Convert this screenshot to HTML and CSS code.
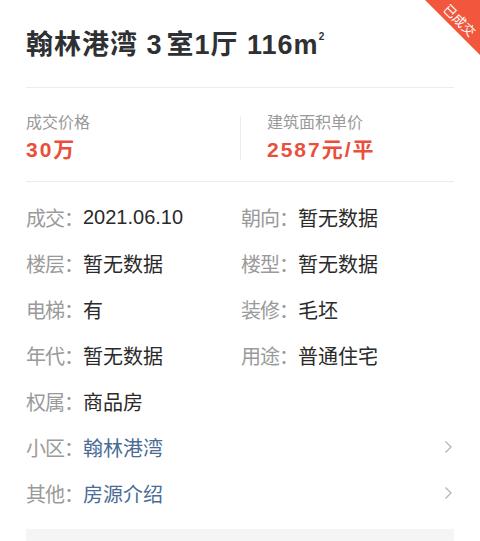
FILE: index.html
```html
<!DOCTYPE html>
<html lang="zh-CN">
<head>
    <meta charset="UTF-8">
    <meta name="viewport" content="width=device-width, initial-scale=1.0">
    <title>翰林港湾 成交详情</title>
    <link rel="stylesheet" href="styles.css">
</head>
<body>
    <div id="card">
        <div class="ribbon"><span>已成交</span></div>

        <h1 class="title">翰林港湾 <span class="num">3</span>室1厅 116m<sup>2</sup></h1>

        <div class="price-row">
            <div class="price-item">
                <div class="price-label">成交价格</div>
                <div class="price-value">30万</div>
            </div>
            <div class="v-line"></div>
            <div class="price-item second">
                <div class="price-label">建筑面积单价</div>
                <div class="price-value">2587元/平</div>
            </div>
        </div>

        <div class="info-list">
            <div class="info-item"><span class="key">成交：</span><span class="val">2021.06.10</span></div>
            <div class="info-item"><span class="key">朝向：</span><span class="val">暂无数据</span></div>
            <div class="info-item"><span class="key">楼层：</span><span class="val">暂无数据</span></div>
            <div class="info-item"><span class="key">楼型：</span><span class="val">暂无数据</span></div>
            <div class="info-item"><span class="key">电梯：</span><span class="val">有</span></div>
            <div class="info-item"><span class="key">装修：</span><span class="val">毛坯</span></div>
            <div class="info-item"><span class="key">年代：</span><span class="val">暂无数据</span></div>
            <div class="info-item"><span class="key">用途：</span><span class="val">普通住宅</span></div>
            <div class="info-item full"><span class="key">权属：</span><span class="val">商品房</span></div>
            <a class="info-item full link" href="#">
                <span class="key">小区：</span><span class="val">翰林港湾</span>
                <svg class="arrow" width="9" height="14" viewBox="0 0 9 14"><polyline points="1.5,1.5 7,7 1.5,12.5" fill="none" stroke="#b5b5b5" stroke-width="1.3"/></svg>
            </a>
            <a class="info-item full link" href="#">
                <span class="key">其他：</span><span class="val">房源介绍</span>
                <svg class="arrow" width="9" height="14" viewBox="0 0 9 14"><polyline points="1.5,1.5 7,7 1.5,12.5" fill="none" stroke="#b5b5b5" stroke-width="1.3"/></svg>
            </a>
        </div>

        <div class="gray-box"></div>
    </div>
</body>
</html>
```

FILE: styles.css
```css
body {
    margin: 0;
    background-color: #fff;
    font-family: 'Liberation Sans', 'Noto Sans CJK SC', sans-serif;
    color: #333;
}
#card {
    position: relative;
    padding: 27px 26px 0;
    overflow: hidden;
    height: 541px;
    box-sizing: border-box;
}
.ribbon {
    position: absolute;
    top: 0;
    right: 0;
    width: 55px;
    height: 55px;
    background-color: #f2573d;
    clip-path: polygon(0 0, 100% 0, 100% 100%);
}
.ribbon span {
    position: absolute;
    left: 12px;
    top: 12px;
    width: 44px;
    height: 18px;
    line-height: 18px;
    font-size: 13px;
    color: #fff;
    text-align: center;
    transform: rotate(45deg);
}
.title {
    margin: 0;
    font-size: 27px;
    line-height: 36px;
    font-weight: bold;
    letter-spacing: 1px;
    color: #2e3033;
    padding-bottom: 24px;
    border-bottom: 1px solid #ececec;
}
.title .num {
    margin-right: 4px;
}
.title sup {
    font-size: 10px;
    vertical-align: top;
    line-height: 20px;
}
.price-row {
    display: grid;
    grid-template-columns: 214px 1px 1fr;
    align-items: center;
    padding: 23px 0 16px;
    border-bottom: 1px solid #ececec;
}
.price-item.second {
    padding-left: 26px;
}
.v-line {
    height: 44px;
    background-color: #ececec;
}
.price-label {
    font-size: 16px;
    line-height: 24px;
    color: #999;
}
.price-value {
    font-size: 21px;
    line-height: 30px;
    font-weight: bold;
    letter-spacing: 2px;
    color: #e8503b;
}
.info-list {
    display: grid;
    grid-template-columns: 215px 1fr;
    padding-top: 12px;
}
.info-item {
    display: flex;
    align-items: center;
    height: 46px;
    font-size: 20px;
    white-space: nowrap;
}
.info-item.full {
    grid-column: span 2;
}
.key {
    color: #9a9a9a;
    letter-spacing: -1px;
}
.val {
    color: #2a2a2a;
}
.link {
    text-decoration: none;
}
.link .val {
    color: #4a6c95;
}
.arrow {
    margin-left: auto;
    margin-right: 1px;
}
.gray-box {
    margin-top: 13px;
    height: 40px;
    background-color: #f5f5f5;
}
```
